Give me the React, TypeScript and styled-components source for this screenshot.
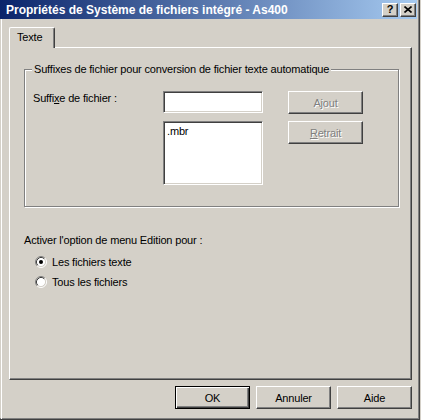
import React from 'react';
import styled, { createGlobalStyle } from 'styled-components';

const Global = createGlobalStyle`
  html, body { margin: 0; padding: 0; background: #d4d0c8; }
  body {
    font-family: "Liberation Sans", Arial, sans-serif;
    font-size: 11px;
    letter-spacing: -0.17px;
    color: #000;
  }
  * { box-sizing: border-box; }
`;

const Window = styled.div`
  width: 420px;
  height: 420px;
  background: #d4d0c8;
  border-right: 1px solid #404040;
  border-bottom: 1px solid #404040;
  box-shadow: inset -1px -1px 0 #808080;
  display: flex;
  flex-direction: column;
`;

const TitleBar = styled.div`
  width: 417px;
  height: 19px;
  flex: none;
  background: linear-gradient(to right, #0a246a, #a6caf0);
  display: flex;
  align-items: center;
  padding: 0 1px 0 6px;
`;

const TitleText = styled.div`
  flex: 1;
  color: #fff;
  font-weight: bold;
  font-size: 12px;
  letter-spacing: 0;
  white-space: nowrap;
`;

const CaptionButton = styled.div<{ $gap?: number }>`
  width: 16px;
  height: 14px;
  margin-left: ${(p) => p.$gap ?? 0}px;
  background: #d4d0c8;
  border: 1px solid;
  border-color: #fff #404040 #404040 #fff;
  box-shadow: inset -1px -1px 0 #808080;
  display: flex;
  align-items: center;
  justify-content: center;
  font-weight: bold;
  font-size: 11px;
  letter-spacing: 0;
  line-height: 1;
`;

const Body = styled.div`
  flex: 1;
  margin-left: 1px;
  border-left: 1px solid #fff;
  padding: 8px 0 0 7px;
  display: flex;
  flex-direction: column;
`;

const TabStrip = styled.div`
  height: 20px;
  display: flex;
  align-items: flex-end;
  position: relative;
  z-index: 1;
`;

const Tab = styled.div`
  width: 46px;
  height: 21px;
  margin-bottom: -1px;
  background: #d4d0c8;
  border-top: 1px solid #fff;
  border-left: 1px solid #fff;
  border-right: 1px solid #404040;
  border-top-left-radius: 2px;
  border-top-right-radius: 2px;
  box-shadow: inset -1px 0 0 #808080;
  padding: 3px 0 0 7px;
`;

const Panel = styled.div`
  width: 403px;
  height: 333px;
  border: 1px solid;
  border-color: #fff #404040 #404040 #fff;
  box-shadow: inset -1px -1px 0 #808080;
  padding: 21px 0 0 14px;
  display: flex;
  flex-direction: column;
`;

const Group = styled.div`
  position: relative;
  width: 375px;
  height: 138px;
  border: 1px solid #808080;
  box-shadow: inset 1px 1px 0 #fff, 1px 1px 0 #fff;
  padding: 21px 0 0 8px;
`;

const Legend = styled.div`
  position: absolute;
  left: 7px;
  top: -7px;
  padding: 0 2px;
  background: #d4d0c8;
  line-height: 13px;
  white-space: nowrap;
`;

const GroupGrid = styled.div`
  display: grid;
  grid-template-columns: 130px 125px 75px;
  grid-template-rows: 23px 64px;
  row-gap: 7px;
`;

const Label = styled.div`
  line-height: 13px;
  padding-top: 1px;
  white-space: nowrap;
`;

const Sunken = styled.div<{ $h: number }>`
  width: 100px;
  height: ${(p) => p.$h}px;
  background: #fff;
  border: 1px solid;
  border-color: #808080 #fff #fff #808080;
  box-shadow: inset 1px 1px 0 #404040, inset -1px -1px 0 #d4d0c8;
  padding: 3px 3px;
  line-height: 13px;
`;

const Button = styled.div<{ $disabled?: boolean; $default?: boolean }>`
  width: 75px;
  height: 23px;
  display: flex;
  align-items: center;
  justify-content: center;
  background: #d4d0c8;
  border: 1px solid;
  border-color: ${(p) => (p.$default ? '#000' : '#fff #404040 #404040 #fff')};
  box-shadow: ${(p) =>
    p.$default
      ? 'inset 1px 1px 0 #fff, inset -1px -1px 0 #404040, inset -2px -2px 0 #808080'
      : 'inset -1px -1px 0 #808080'};
  color: ${(p) => (p.$disabled ? '#808080' : '#000')};
  text-shadow: ${(p) => (p.$disabled ? '1px 1px 0 #fff' : 'none')};
  white-space: nowrap;
`;

const Caption = styled.div`
  margin-top: 27px;
  line-height: 13px;
`;

const RadioList = styled.div`
  margin-top: 5px;
  padding-left: 11px;
  display: flex;
  flex-direction: column;
`;

const RadioRow = styled.div`
  height: 20px;
  display: flex;
  align-items: center;
  gap: 5px;
`;

const Footer = styled.div`
  width: 403px;
  margin-top: 6px;
  display: flex;
  justify-content: flex-end;
  gap: 6px;
`;

const Radio: React.FC<{ checked?: boolean }> = ({ checked }) => (
  <svg width="12" height="12" viewBox="0 0 12 12">
    <circle cx="6" cy="6" r="4.5" fill="#fff" />
    <path d="M2.11 9.89 A5.5 5.5 0 0 1 9.89 2.11" stroke="#808080" fill="none" />
    <path d="M9.89 2.11 A5.5 5.5 0 0 1 2.11 9.89" stroke="#fff" fill="none" />
    <path d="M2.82 9.18 A4.5 4.5 0 0 1 9.18 2.82" stroke="#404040" fill="none" />
    <path d="M9.18 2.82 A4.5 4.5 0 0 1 2.82 9.18" stroke="#d4d0c8" fill="none" />
    {checked && <circle cx="6" cy="6" r="2" fill="#000" />}
  </svg>
);

const CloseGlyph = () => (
  <svg width="8" height="7" viewBox="0 0 8 7">
    <path d="M0.5 0.5 L7.5 6.5 M7.5 0.5 L0.5 6.5" stroke="#000" strokeWidth="1.6" />
  </svg>
);

export default function App() {
  return (
    <>
      <Global />
      <Window>
        <TitleBar>
          <TitleText>Propriétés de Système de fichiers intégré - As400</TitleText>
          <CaptionButton>?</CaptionButton>
          <CaptionButton $gap={2}>
            <CloseGlyph />
          </CaptionButton>
        </TitleBar>
        <Body>
          <TabStrip>
            <Tab>Texte</Tab>
          </TabStrip>
          <Panel>
            <Group>
              <Legend>Suffixes de fichier pour conversion de fichier texte automatique</Legend>
              <GroupGrid>
                <Label>
                  Suffi<u>x</u>e de fichier :
                </Label>
                <Sunken $h={22} />
                <Button $disabled>Ajout</Button>
                <div />
                <Sunken $h={64}>.mbr</Sunken>
                <Button $disabled>
                  <span>
                    <u>R</u>etrait
                  </span>
                </Button>
              </GroupGrid>
            </Group>
            <Caption>Activer l'option de menu Edition pour :</Caption>
            <RadioList>
              <RadioRow>
                <Radio checked />
                <span>Les fichiers texte</span>
              </RadioRow>
              <RadioRow>
                <Radio />
                <span>Tous les fichiers</span>
              </RadioRow>
            </RadioList>
          </Panel>
          <Footer>
            <Button $default>OK</Button>
            <Button>Annuler</Button>
            <Button>Aide</Button>
          </Footer>
        </Body>
      </Window>
    </>
  );
}
